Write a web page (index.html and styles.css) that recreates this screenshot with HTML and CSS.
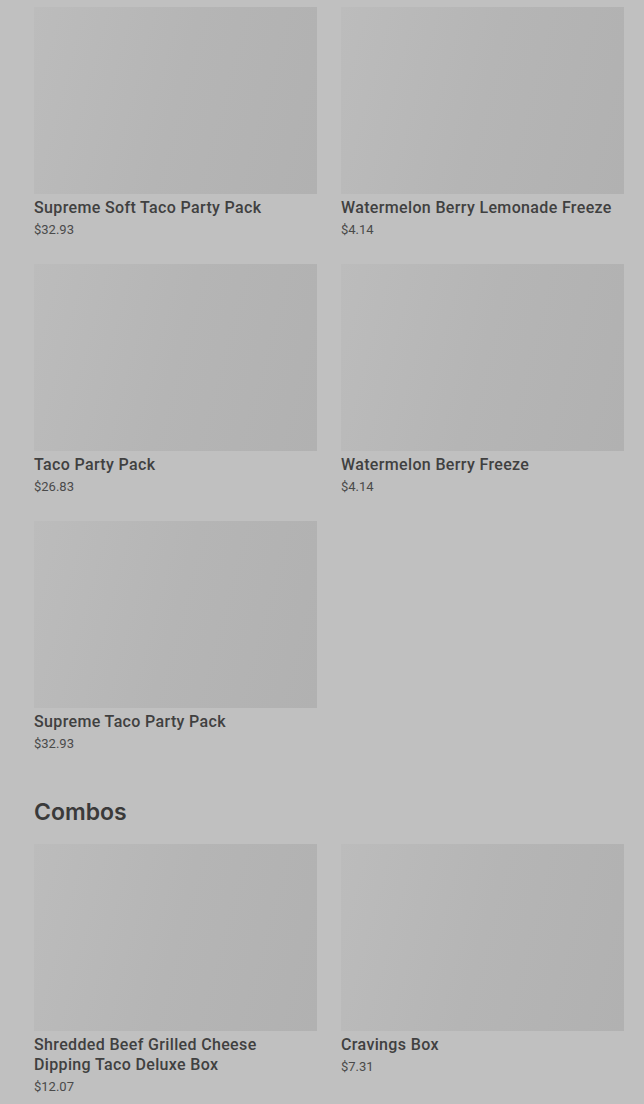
FILE: index.html
```html
<!DOCTYPE html>
<html lang="en">
<head>
  <meta charset="UTF-8">
  <meta name="viewport" content="width=device-width, initial-scale=1.0">
  <title>Menu</title>
  <link rel="stylesheet" href="styles.css">
</head>
<body>
  <div class="menu">
    <div class="grid">
      <div class="card">
        <div class="thumb"></div>
        <h3>Supreme Soft Taco Party Pack</h3>
        <p class="price">$32.93</p>
      </div>
      <div class="card">
        <div class="thumb"></div>
        <h3>Watermelon Berry Lemonade Freeze</h3>
        <p class="price">$4.14</p>
      </div>
      <div class="card">
        <div class="thumb"></div>
        <h3>Taco Party Pack</h3>
        <p class="price">$26.83</p>
      </div>
      <div class="card">
        <div class="thumb"></div>
        <h3>Watermelon Berry Freeze</h3>
        <p class="price">$4.14</p>
      </div>
      <div class="card">
        <div class="thumb"></div>
        <h3>Supreme Taco Party Pack</h3>
        <p class="price">$32.93</p>
      </div>
    </div>

    <h2>Combos</h2>
    <div class="grid">
      <div class="card">
        <div class="thumb"></div>
        <h3>Shredded Beef Grilled Cheese Dipping Taco Deluxe Box</h3>
        <p class="price">$12.07</p>
      </div>
      <div class="card">
        <div class="thumb"></div>
        <h3>Cravings Box</h3>
        <p class="price">$7.31</p>
      </div>
    </div>
  </div>
</body>
</html>
```

FILE: styles.css
```css
body {
  margin: 0;
  padding: 0;
  background: #c0c0c0;
  font-family: Roboto, "Liberation Sans", sans-serif;
  color: #3c3c3c;
}
.menu {
  padding: 7px 20px 40px 34px;
}
.grid {
  display: grid;
  grid-template-columns: 1fr 1fr;
  align-items: start;
  column-gap: 24px;
  row-gap: 25px;
}
.thumb {
  height: 187px;
  background: linear-gradient(105deg, #bcbcbc 0%, #b5b5b5 50%, #b1b1b1 100%);
}
.card h3 {
  margin: 4px 0 0;
  font-size: 16px;
  line-height: 20px;
  font-weight: 500;
  letter-spacing: 0.35px;
  color: #404040;
}
.price {
  margin: 3px 0 0;
  font-size: 13px;
  line-height: 18px;
  color: #4a4a4a;
}
h2 {
  margin: 45px 0 18px;
  font-family: Inter, sans-serif;
  font-size: 23px;
  line-height: 28px;
  font-weight: 600;
  color: #3a3a3a;
}
```
